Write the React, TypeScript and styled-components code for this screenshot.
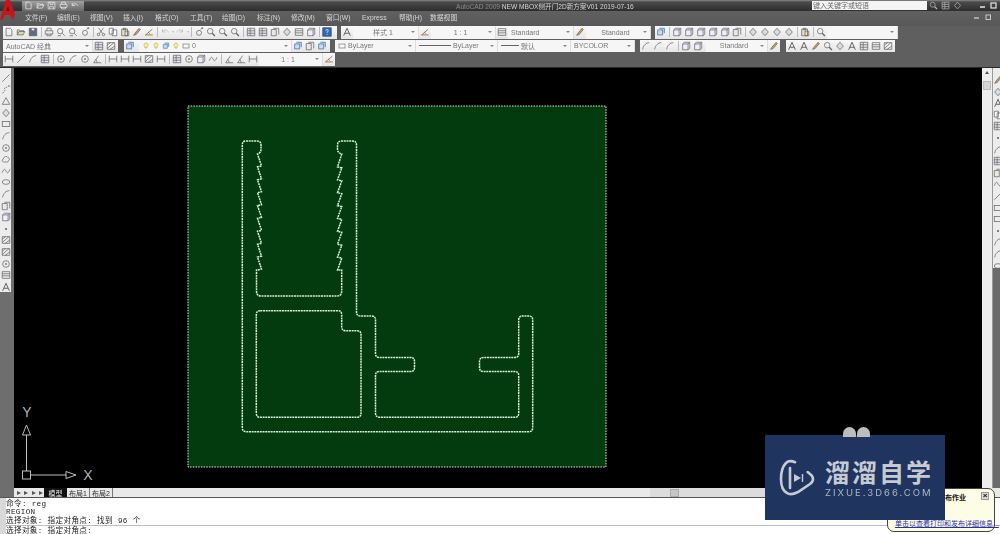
import React from "react";
import styled, { createGlobalStyle } from "styled-components";

const Global = createGlobalStyle`
  html, body { margin: 0; padding: 0; background: #000; }
  #root { width: 1000px; height: 534px; overflow: hidden; }
`;

const CJK = `"Liberation Sans", "Noto Sans CJK SC", sans-serif`;

const Page = styled.div`
  position: relative;
  width: 1000px;
  height: 534px;
  display: flex;
  flex-direction: column;
  overflow: hidden;
  font-family: ${CJK};
`;

const TitleBar = styled.div`
  height: 11px;
  display: flex;
  align-items: center;
  background: linear-gradient(#8a8a8a 0, #4a4a4a 2px, #2e2e2e 100%);
  filter: blur(0.35px);
`;
const AppLogo = styled.div`
  width: 22px;
  height: 11px;
  flex: none;
`;
const QuickAccess = styled.div`
  width: 62px;
  height: 10px;
  display: flex;
  align-items: center;
  gap: 2.5px;
  padding-left: 2px;
  box-sizing: border-box;
  background: linear-gradient(#a0a0a0, #6a6a6a);
  svg { stroke: #f2f2f2; }
  svg * { fill: none; stroke: #f2f2f2; }
`;
const TitleText = styled.div`
  margin-left: 372px;
  width: 356px;
  flex: none;
  font-size: 6.6px;
  color: #d4d4d4;
  white-space: nowrap;
  span { color: #8a8a8a; }
`;
const SearchBox = styled.div`
  width: 115px;
  height: 9px;
  flex: none;
  background: #f4f4f4;
  color: #666;
  font-size: 7px;
  line-height: 9px;
  padding-left: 1px;
  box-sizing: border-box;
`;
const TitleTools = styled.div`
  display: flex;
  gap: 3px;
  margin-left: 2px;
  width: 38px;
  svg, svg * { stroke: #bbb; fill: none; }
`;
const WinButtons = styled.div`
  display: flex;
  align-items: center;
  gap: 4px;
  margin-left: 12px;
  color: #e6e6e6;
`;

const MenuBar = styled.div`
  height: 15px;
  display: flex;
  align-items: center;
  padding: 0 0 3px 25px;
  box-sizing: border-box;
  background: linear-gradient(#606060, #585858);
  filter: blur(0.3px);
`;
const MenuItem = styled.span<{ $w: number }>`
  width: ${(p) => p.$w}px;
  flex: none;
  font-size: 6.8px;
  color: #d6d6d6;
  white-space: nowrap;
`;
const DocButtons = styled.div`
  margin-left: auto;
  margin-right: 8px;
  display: flex;
  gap: 5px;
  color: #c8c8c8;
`;

const Toolbars = styled.div`
  height: 42px;
  background: #5f5f5f;
  display: flex;
  flex-direction: column;
  gap: 1px;
  box-sizing: border-box;
  filter: blur(0.45px);
  border-bottom: 1px solid #2a2a2a;
`;
const ToolRow = styled.div`
  height: 12.5px;
  display: flex;
  align-items: stretch;
`;
const Strip = styled.div<{ $x?: number; $w: number }>`
  margin-left: ${(p) => p.$x ?? 0}px;
  width: ${(p) => p.$w}px;
  flex: none;
  display: flex;
  align-items: center;
  background: linear-gradient(#f8f8f8, #e6e6e6);
  overflow: hidden;
`;
const Sep = styled.i`
  width: 1px;
  height: 10px;
  margin: 0 1.5px;
  flex: none;
  background: #bbb;
`;
const Drop = styled.i`
  width: 0;
  height: 0;
  flex: none;
  margin: 0 0.5px;
  border: 1.5px solid transparent;
  border-top: 2px solid #bbb;
  border-bottom: 0;
`;
const Combo = styled.div<{ $w: number; $center?: boolean; $ml?: number }>`
  position: relative;
  width: ${(p) => p.$w}px;
  height: 100%;
  flex: none;
  margin-left: ${(p) => p.$ml ?? 0}px;
  box-sizing: border-box;
  display: flex;
  align-items: center;
  justify-content: ${(p) => (p.$center ? "center" : "flex-start")};
  padding: 0 ${(p) => (p.$center ? 8 : 3)}px 0 3px;
  font-size: 7px;
  color: #777;
  white-space: nowrap;
  background: #f6f6f6;
  border-right: 1px solid #ddd;
  gap: 2px;
  &::after {
    content: "";
    position: absolute;
    right: 3px;
    top: 5px;
    border: 2px solid transparent;
    border-top: 2.5px solid #888;
    border-bottom: 0;
  }
`;
const DashLine = styled.i<{ $w: number }>`
  width: ${(p) => p.$w}px;
  height: 1px;
  background: #666;
  flex: none;
`;

const Main = styled.div`
  flex: 1;
  min-height: 0;
  display: flex;
`;
const LeftDock = styled.div`
  width: 14px;
  flex: none;
  background: #6e6e6e;
  filter: blur(0.4px);
`;
const LeftBar = styled.div`
  width: 11px;
  height: 224px;
  padding-top: 5px;
  box-sizing: border-box;
  background: #ececec;
  display: flex;
  flex-direction: column;
  align-items: center;
  gap: 1.6px;
`;
const Canvas = styled.div`
  flex: 1;
  min-width: 0;
  background: #000;
  svg { display: block; width: 100%; height: 100%; }
`;
const VScroll = styled.div`
  width: 11px;
  flex: none;
  background: #eeeeee;
  display: flex;
  flex-direction: column;
  align-items: center;
  border-right: 1px solid #999;
  box-sizing: border-box;
  filter: blur(0.3px);
`;
const ScrollArrow = styled.div`
  margin-top: 3px;
  border: 2.5px solid transparent;
  border-bottom: 3px solid #555;
  border-top: 0;
`;
const ScrollThumb = styled.div`
  margin-top: 7px;
  width: 8px;
  height: 9px;
  background: #d6d6d6;
  border: 1px solid #bbb;
  box-sizing: border-box;
`;
const RightDock = styled.div`
  width: 7px;
  flex: none;
  background: #6b6b6b;
  overflow: hidden;
  filter: blur(0.4px);
`;
const RightBar = styled.div`
  width: 12px;
  height: 200px;
  background: #ececec;
  padding-top: 7px;
  box-sizing: border-box;
  display: flex;
  flex-direction: column;
  gap: 1.6px;
`;

const TabRow = styled.div`
  height: 9px;
  flex: none;
  display: flex;
  align-items: center;
  background: #6e6e6e;
  border-bottom: 1px solid #555;
  box-sizing: content-box;
  filter: blur(0.3px);
`;
const TabStrip = styled.div`
  margin-left: 14px;
  flex: 1;
  height: 100%;
  display: flex;
  align-items: center;
  background: #e9e9e9;
  font-size: 7px;
`;
const TabNav = styled.div`
  width: 30px;
  display: flex;
  gap: 2px;
  padding-left: 3px;
  box-sizing: border-box;
  flex: none;
`;
const NavBtn = styled.i`
  width: 4px;
  height: 0;
  border-top: 2.5px solid transparent;
  border-bottom: 2.5px solid transparent;
  border-left: 4px solid #555;
`;
const Tab = styled.span<{ $active?: boolean }>`
  width: 23px;
  height: 100%;
  flex: none;
  display: flex;
  align-items: center;
  justify-content: center;
  background: ${(p) => (p.$active ? "#111" : "transparent")};
  color: ${(p) => (p.$active ? "#eee" : "#333")};
  border-right: ${(p) => (p.$active ? "0" : "1px solid #777")};
  white-space: nowrap;
  box-sizing: border-box;
`;
const HScroll = styled.div`
  margin-left: auto;
  width: 332px;
  height: 100%;
  display: flex;
  align-items: center;
  background: #dcdcdc;
  margin-right: 18px;
`;
const HThumb = styled.i`
  margin-left: 20px;
  width: 9px;
  height: 8px;
  background: #c6c6c6;
  border: 1px solid #aaa;
  box-sizing: border-box;
`;

const Command = styled.div`
  height: 36px;
  flex: none;
  display: flex;
  background: #fff;
  filter: blur(0.3px);
  overflow: hidden;
`;
const CmdGutter = styled.div`
  width: 6px;
  flex: none;
  background: #d8d8d8;
`;
const CmdBody = styled.div`
  flex: 1;
  display: flex;
  flex-direction: column;
`;
const CmdHistory = styled.div`
  height: 28px;
  flex: none;
  padding-top: 1.5px;
  border-bottom: 1px solid #bdbdbd;
  box-sizing: border-box;
  overflow: hidden;
`;
const CmdInput = styled.div`
  flex: none;
  height: 8px;
  padding-top: 1px;
  box-sizing: content-box;
`;
const CmdLine = styled.div`
  height: 8.6px;
  line-height: 8.6px;
  font-family: "Liberation Mono", "Noto Sans CJK SC", monospace;
  font-size: 7.6px;
  letter-spacing: 0.35px;
  color: #222;
  white-space: nowrap;
`;

const Watermark = styled.div`
  position: absolute;
  left: 765px;
  top: 435px;
  width: 180px;
  height: 85px;
  background: #1f3560;
  z-index: 3;
  display: flex;
  align-items: center;
  gap: 10px;
  padding-left: 14px;
  box-sizing: border-box;
`;
const Ears = styled.div`
  position: absolute;
  left: 78px;
  top: -8px;
  display: flex;
  gap: 1px;
`;
const Ear = styled.i`
  width: 13px;
  height: 10px;
  border-radius: 7px 7px 0 0;
  background: #bdbdbd;
`;
const BrandText = styled.div`
  display: flex;
  flex-direction: column;
  color: #c6cad2;
`;
const BrandName = styled.div`
  font-family: "Noto Sans CJK SC", sans-serif;
  font-size: 25px;
  line-height: 30px;
  font-weight: 700;
  letter-spacing: 2px;
  white-space: nowrap;
`;
const BrandUrl = styled.div`
  font-family: "Inter", sans-serif;
  font-size: 9.5px;
  line-height: 13px;
  letter-spacing: 2px;
  white-space: nowrap;
  opacity: 0.85;
`;

const Bubble = styled.div`
  position: absolute;
  left: 887px;
  top: 488px;
  width: 108px;
  height: 44px;
  background: #fdfde6;
  border: 1px solid #444;
  border-radius: 7px;
  box-sizing: border-box;
  z-index: 2;
  font-size: 7px;
  color: #111;
`;
const BubbleTitle = styled.div`
  position: absolute;
  left: 57px;
  top: 3px;
  font-weight: 700;
  white-space: nowrap;
  font-size: 7px;
`;
const BubbleClose = styled.div`
  position: absolute;
  right: 5px;
  top: 3px;
  width: 8px;
  height: 8px;
  background: #ddd;
  border: 1px solid #999;
  box-sizing: border-box;
  font-size: 8px;
  font-weight: 700;
  line-height: 6px;
  text-align: center;
`;
const BubbleLink = styled.div`
  position: absolute;
  left: 7px;
  top: 29px;
  white-space: nowrap;
  color: #2a2fb0;
  text-decoration: underline;
  font-size: 7px;
`;

const RedLogo = styled.svg`
  position: absolute;
  left: 0;
  top: 0;
  width: 15px;
  height: 21px;
  z-index: 2;
  filter: blur(0.4px);
`;

type Kind =
  | "doc" | "open" | "save" | "print" | "preview" | "cut" | "copy" | "paste" | "brush"
  | "undo" | "redo" | "zoom" | "pan" | "grid" | "help" | "text" | "box" | "diag" | "poly"
  | "rect" | "arc" | "circle" | "cloud" | "spline" | "ellipse" | "dim" | "angle" | "hatch"
  | "table" | "dot" | "layer" | "bulb" | "gem" | "tri" | "scale" | "stack";

const shapes: Record<Kind, React.ReactNode> = {
  doc: <path d="M2.500 1.500h5l2 2v7h-7z" />,
  open: <path d="M1.500 9.500v-6h3l1 1h4v1.500M1.500 9.500l2-4h7l-2 4z" fill="#e8d9a0" />,
  save: <path d="M1.500 1.500h9v9h-9zM4 1.500v3h4v-3M3.500 10.500v-3h5v3" fill="#5a6a90" />,
  print: <path d="M3.500 4.500v-3h5v3M1.500 4.500h9v4h-9zM3.500 8v2.500h5V8" />,
  preview: <><circle cx="5" cy="5" r="3.200" /><path d="M7.500 7.500l3 3" /><path d="M2 10.500h4" /></>,
  cut: <><circle cx="3" cy="9" r="1.500" /><circle cx="9" cy="9" r="1.500" /><path d="M4 8l5-7M8 8L3 1" /></>,
  copy: <path d="M1.500 1.500h5v7h-5zM5 3.500h5.500v7H5z" fill="#fff" />,
  paste: <path d="M2 2.500h7v8H2zM4 1.500h3v2H4zM6 5h4.500v5.500H6z" fill="#e8e0c0" />,
  brush: <path d="M2 10l3-1 5-6-1.500-1.500-5 6z" fill="#d7a040" />,
  undo: <path d="M3 6c1-3 6-3.500 7 .5M3 6V2.500M3 6h3.500" stroke="#b8b8b8" />,
  redo: <path d="M9 6c-1-3-6-3.500-7 .5M9 6V2.500M9 6H5.500" stroke="#b8b8b8" />,
  zoom: <><circle cx="5" cy="5" r="3.300" /><path d="M7.500 7.500l3.200 3.200" strokeWidth="1.600" /></>,
  pan: <><circle cx="6" cy="7" r="3" /><path d="M8 3l2-2M9 1h1.500v1.500" stroke="#2a6a2a" /></>,
  grid: <path d="M1.500 1.500h9v9h-9zM1.500 4.500h9M1.500 7.500h9M5 1.500v9" fill="#dfe6f2" />,
  help: <><rect x="1" y="1" width="10" height="10" fill="#3568b0" stroke="#1f3f80" /><path d="M4.500 4.500c0-2 3-2 3 0 0 1.200-1.500 1.200-1.500 2.500M6 8.500v1" stroke="#fff" /></>,
  text: <path d="M2 10.500 6 1.500l4 9M3.500 7.500h5" strokeWidth="1.200" />,
  box: <path d="M2 3.500h6.500v7H2zM2 3.500l2-2h6.500l-2 2M8.500 10.500l2-2v-7" fill="#eef" />,
  diag: <path d="M1.500 10.500l9-9" />,
  poly: <path d="M2 10l3-4-1-2 6-3M9 1h2" strokeDasharray="2 1" />,
  rect: <rect x="1.500" y="3" width="9" height="6" />,
  arc: <path d="M2 10C3 5 6 2 10 2" />,
  circle: <><circle cx="6" cy="6" r="4" /><circle cx="6" cy="6" r="0.800" /></>,
  cloud: <path d="M3 9.500C1 9 1 6 3 6c0-3 4-4 5-2 2 0 3 3 1 4 0 2-3 2-3 1-1 1-2 1-3 .5z" />,
  spline: <path d="M1.500 8c2-5 3-5 4.500-2s3 3 4.500-2" />,
  ellipse: <ellipse cx="6" cy="6" rx="4.500" ry="2.800" />,
  dim: <path d="M1.500 2v8M10.500 2v8M1.500 6h9" />,
  angle: <path d="M2 10.500h9M2 10.500L8 2M6 10.500c0-2-.5-3-1.500-4" />,
  hatch: <path d="M1.500 2h9v8h-9zM1.500 5l4-3M1.500 9l8-7M5 10l5.500-4" />,
  table: <path d="M1.500 2h9v8h-9zM1.500 4.500h9M1.500 7h9" />,
  dot: <circle cx="6" cy="6" r="0.800" fill="#333" />,
  layer: <path d="M2 3.500h6v6H2zM4 1.500h6v6" fill="#c9dcf0" stroke="#3d6ea8" />,
  bulb: <path d="M6 1.500a3 3 0 0 1 1.500 5.500v2h-3V7A3 3 0 0 1 6 1.500z" fill="#fbf5a0" stroke="#b0a030" />,
  gem: <path d="M6 1.500l4 4.500-4 4.500L2 6z" fill="#d9dde5" />,
  tri: <path d="M1.500 10L6 2l4.500 8z" />,
  scale: <path d="M1.500 9.500h9M2 9.500l8-7M5 6l2 2" stroke="#8a5a20" fill="#d8a838" />,
  stack: <path d="M1.500 3h6v7.500h-6zM4 1.500h6.500V9" fill="#e8e8e8" />,
};

const Glyph = styled.svg<{ $size: number }>`
  width: ${(p) => p.$size}px;
  height: ${(p) => p.$size}px;
  flex: none;
  fill: none;
  stroke: #666;
  stroke-width: 0.9;
`;

const Ic = ({ k, s = 10 }: { k: Kind; s?: number }) => (
  <Glyph viewBox="0 0 12 12" $size={s}>{shapes[k]}</Glyph>
);

const IconSlot = styled.span`
  width: 12px;
  height: 100%;
  display: flex;
  align-items: center;
  justify-content: center;
  flex: none;
`;

const Icons = ({ list }: { list: string }) => (
  <>
    {list.split(" ").map((k, i) =>
      k === "|" ? <Sep key={i} /> : k === "v" ? <Drop key={i} /> : (
        <IconSlot key={i}><Ic k={k as Kind} /></IconSlot>
      )
    )}
  </>
);

const leftIcons: Kind[] = ["diag", "poly", "tri", "gem", "rect", "arc", "circle", "cloud", "spline", "ellipse", "arc", "stack", "box", "dot", "hatch", "hatch", "circle", "table", "text"];
const rightIcons: Kind[] = ["brush", "gem", "text", "copy", "grid", "dot", "arc", "grid", "stack", "spline", "diag", "rect", "rect", "dot", "arc", "arc", "ellipse"];

function teeth(x0: number, x1: number, yStart: number, yEnd: number, n: number) {
  const step = (yEnd - yStart) / n;
  let d = "";
  for (let i = 0; i < n; i++) {
    const y = yStart + step * i;
    d += ` L${x1} ${(y + step - 1).toFixed(1)} L${x0} ${(y + step).toFixed(1)}`;
  }
  return d;
}
function teethUp(x0: number, x1: number, yStart: number, yEnd: number, n: number) {
  const step = (yEnd - yStart) / n;
  let d = "";
  for (let i = n - 1; i >= 0; i--) {
    const y = yStart + step * i;
    d += i > 0 ? ` L${x1} ${(y + 1).toFixed(1)} L${x0} ${y.toFixed(1)}` : ` L${x1} ${y.toFixed(1)}`;
  }
  return d;
}

const outer =
  "M246 141 L257 141 Q261 141 261 145 L261 149 Q261 153 257.500 154" +
  teeth(257.500, 261.500, 154, 270, 9) +
  " L256.500 270 L256.500 291 Q256.500 296 261 296 L337 296 Q341.700 296 341.700 291 L341.700 270 L337.500 270" +
  teethUp(337.500, 341.800, 154, 270, 9) +
  " Q337.500 153 337.500 149 L337.500 145 Q337.500 141 341.500 141 L352.500 141 Q356.500 141 356.500 145" +
  " L356.500 312 Q356.500 316 360.500 316 L371.500 316 Q375.500 316 375.500 320 L375.500 353.500 Q375.500 357.500 379.500 357.500" +
  " L410.500 357.500 Q414.500 357.500 414.500 361.500 L414.500 367.500 Q414.500 371.500 410.500 371.500 L379.500 371.500 Q375.500 371.500 375.500 375.500" +
  " L375.500 413.300 Q375.500 417.300 379.500 417.300 L514.700 417.300 Q518.700 417.300 518.700 413.300 L518.700 375.500 Q518.700 371.500 514.700 371.500 L483.500 371.500 Q479.500 371.500 479.500 367.500" +
  " L479.500 361.500 Q479.500 357.500 483.500 357.500 L514.700 357.500 Q518.700 357.500 518.700 353.500 L518.700 320 Q518.700 316 522.700 316 L528.700 316 Q532.700 316 532.700 320" +
  " L532.700 427.700 Q532.700 431.700 528.700 431.700 L246.300 431.700 Q242.300 431.700 242.300 427.700 L242.300 145 Q242.300 141 246 141 Z";

const inner =
  "M260.300 310.700 L337.700 310.700 Q341.700 310.700 341.700 314.700 L341.700 326.700 Q341.700 330.700 345.700 330.700 L357 330.700 Q361 330.700 361 334.700" +
  " L361 413.300 Q361 417.300 357 417.300 L260.300 417.300 Q256.300 417.300 256.300 413.300 L256.300 314.700 Q256.300 310.700 260.300 310.700 Z";

const menus: [string, number][] = [
  ["文件(F)", 32], ["编辑(E)", 33], ["视图(V)", 33], ["插入(I)", 32], ["格式(O)", 35],
  ["工具(T)", 32], ["绘图(D)", 35], ["标注(N)", 34], ["修改(M)", 35], ["窗口(W)", 36],
  ["Express", 37], ["帮助(H)", 31], ["数据视图", 40],
];

export default function App() {
  return (
    <Page>
      <Global />
      <TitleBar>
        <AppLogo />
        <QuickAccess>
          <Ic k="doc" s={9} /><Ic k="open" s={9} /><Ic k="save" s={9} /><Ic k="print" s={9} /><Ic k="undo" s={9} />
        </QuickAccess>
        <TitleText><span>AutoCAD 2009</span> NEW MBOX侧开门2D新方案V01 2019-07-16</TitleText>
        <SearchBox>键入关键字或短语</SearchBox>
        <TitleTools>
          <Ic k="zoom" s={9} /><Ic k="grid" s={9} /><Ic k="gem" s={9} />
        </TitleTools>
        <WinButtons>
          <svg width="7" height="9" viewBox="0 0 7 9"><path d="M1 6h5" stroke="currentColor" strokeWidth="1.500" /></svg>
          <svg width="7" height="9" viewBox="0 0 7 9"><rect x="1" y="2" width="5" height="5" fill="none" stroke="currentColor" strokeWidth="1.200" /></svg>
        </WinButtons>
      </TitleBar>

      <MenuBar>
        {menus.map(([t, w]) => <MenuItem key={t} $w={w}>{t}</MenuItem>)}
        <DocButtons>
          <svg width="7" height="8" viewBox="0 0 7 8"><path d="M1 5h5" stroke="currentColor" strokeWidth="1.400" /></svg>
          <svg width="7" height="8" viewBox="0 0 7 8"><rect x="1" y="2" width="4.500" height="4.500" fill="none" stroke="currentColor" /></svg>
        </DocButtons>
      </MenuBar>

      <Toolbars>
        <ToolRow>
          <Strip $x={3} $w={334}>
            <Icons list="doc open save | print preview preview pan | cut copy paste brush scale | undo v redo v | pan zoom zoom zoom | grid grid stack gem table box | help" />
          </Strip>
          <Strip $x={4} $w={310}>
            <IconSlot><Ic k="text" /></IconSlot>
            <Combo $w={66} $center>样式 1</Combo>
            <IconSlot><Ic k="scale" /></IconSlot>
            <Combo $w={65} $center>1 : 1</Combo>
            <IconSlot><Ic k="table" /></IconSlot>
            <Combo $w={66}>Standard</Combo>
            <IconSlot><Ic k="brush" /></IconSlot>
            <Combo $w={65} $center>Standard</Combo>
          </Strip>
          <Strip $x={4} $w={243}>
            <Icons list="layer | box box box box box stack | gem gem gem gem | paste | zoom" />
            <Combo $w={71} />
          </Strip>
        </ToolRow>
        <ToolRow>
          <Strip $x={3} $w={115}>
            <Combo $w={90}>AutoCAD 经典</Combo>
            <IconSlot><Ic k="grid" /></IconSlot>
            <IconSlot><Ic k="hatch" /></IconSlot>
          </Strip>
          <Strip $x={6} $w={206}>
            <IconSlot><Ic k="layer" /></IconSlot>
            <Combo $w={153} $ml={3}>
              <Ic k="bulb" s={8} /><Ic k="bulb" s={8} /><Ic k="layer" s={8} /><Ic k="bulb" s={8} /><Ic k="rect" s={8} />0
            </Combo>
            <IconSlot><Ic k="layer" /></IconSlot>
            <IconSlot><Ic k="stack" /></IconSlot>
            <IconSlot><Ic k="layer" /></IconSlot>
          </Strip>
          <Strip $x={5} $w={300}>
            <Combo $w={81}><Ic k="rect" s={8} />ByLayer</Combo>
            <Combo $w={82}><DashLine $w={32} />ByLayer</Combo>
            <Combo $w={73}><DashLine $w={18} />默认</Combo>
            <Combo $w={64}>BYCOLOR</Combo>
          </Strip>
          <Strip $x={5} $w={140}>
            <Icons list="arc arc arc | box box" />
            <Combo $w={62} $center $ml={2}>Standard</Combo>
            <IconSlot><Ic k="brush" /></IconSlot>
          </Strip>
          <Strip $x={6} $w={109}>
            <Icons list="text text brush zoom gem text grid table hatch" />
          </Strip>
        </ToolRow>
        <ToolRow>
          <Strip $x={3} $w={332}>
            <Icons list="dim diag arc grid | circle arc circle angle | dim dim dim hatch dim | grid circle box spline | angle angle dim" />
            <Combo $w={64} $center>1 : 1</Combo>
            <IconSlot><Ic k="scale" /></IconSlot>
          </Strip>
        </ToolRow>
      </Toolbars>

      <Main>
        <LeftDock>
          <LeftBar>
            {leftIcons.map((k, i) => <Ic key={i} k={k} />)}
          </LeftBar>
        </LeftDock>
        <Canvas>
          <svg viewBox="14 68 968 420" preserveAspectRatio="none">
            <rect x="188" y="106" width="418" height="361" fill="#033b0f" stroke="#d8efd8" strokeWidth="1" strokeDasharray="1.500 1.200" />
            <g fill="none" stroke="#d5efd5" strokeWidth="1.500" strokeDasharray="2 0.700" style={{ filter: "blur(0.25px)" }}>
              <path d={outer} />
              <path d={inner} />
            </g>
            <g fill="none" stroke="#bdbdbd" strokeWidth="1">
              <rect x="22.500" y="471" width="8" height="8" />
              <path d="M26.500 471V435M22.500 435L26.500 425L30.500 435ZM30.500 475H66M66 471.500L76 475L66 478.500Z" />
            </g>
            <text x="27" y="417" textAnchor="middle" fontFamily="Liberation Sans" fontSize="14" fill="#b4b4b4">Y</text>
            <text x="88" y="480" textAnchor="middle" fontFamily="Liberation Sans" fontSize="14" fill="#b4b4b4">X</text>
          </svg>
        </Canvas>
        <VScroll>
          <ScrollArrow />
          <ScrollThumb />
        </VScroll>
        <RightDock>
          <RightBar>
            {rightIcons.map((k, i) => <Ic key={i} k={k} />)}
          </RightBar>
        </RightDock>
      </Main>

      <TabRow>
        <TabStrip>
          <TabNav><NavBtn /><NavBtn /><NavBtn /><NavBtn /></TabNav>
          <Tab $active>模型</Tab>
          <Tab>布局1</Tab>
          <Tab>布局2</Tab>
          <HScroll><HThumb /></HScroll>
        </TabStrip>
      </TabRow>

      <Command>
        <CmdGutter />
        <CmdBody>
          <CmdHistory>
            <CmdLine>命令: reg</CmdLine>
            <CmdLine>REGION</CmdLine>
            <CmdLine>选择对象: 指定对角点: 找到 96 个</CmdLine>
          </CmdHistory>
          <CmdInput>
            <CmdLine>选择对象: 指定对角点:</CmdLine>
          </CmdInput>
        </CmdBody>
      </Command>

      <Bubble>
        <BubbleTitle>布作业</BubbleTitle>
        <BubbleClose>×</BubbleClose>
        <BubbleLink>单击以查看打印和发布详细信息...</BubbleLink>
      </Bubble>

      <Watermark>
        <Ears><Ear /><Ear /></Ears>
        <svg width="36" height="38" viewBox="0 0 36 38" fill="none" stroke="#c6cad2">
          <path d="M7 4C3 8 2 14 2 20s2 12 6 14c3 2 7 1 11-1l12-8c4-3 4-7 0-10L19 5C15 2 10 1 7 4z" strokeWidth="2.600" strokeDasharray="74 16" strokeLinecap="round" />
          <path d="M11 9v20" strokeWidth="2.600" strokeLinecap="round" />
          <path d="M15 15l7 4-7 4z" fill="#c6cad2" stroke="none" />
          <path d="M23.500 15v8" strokeWidth="1.400" />
        </svg>
        <BrandText>
          <BrandName>溜溜自学</BrandName>
          <BrandUrl>ZIXUE.3D66.COM</BrandUrl>
        </BrandText>
      </Watermark>

      <RedLogo viewBox="0 0 15 21">
        <path d="M0 20L6 0h4l5 14-2 6-3-5H5l-3 5z" fill="#c4161c" />
        <path d="M6.500 11l1.500-5 1.500 5z" fill="#5a1010" />
      </RedLogo>
    </Page>
  );
}
